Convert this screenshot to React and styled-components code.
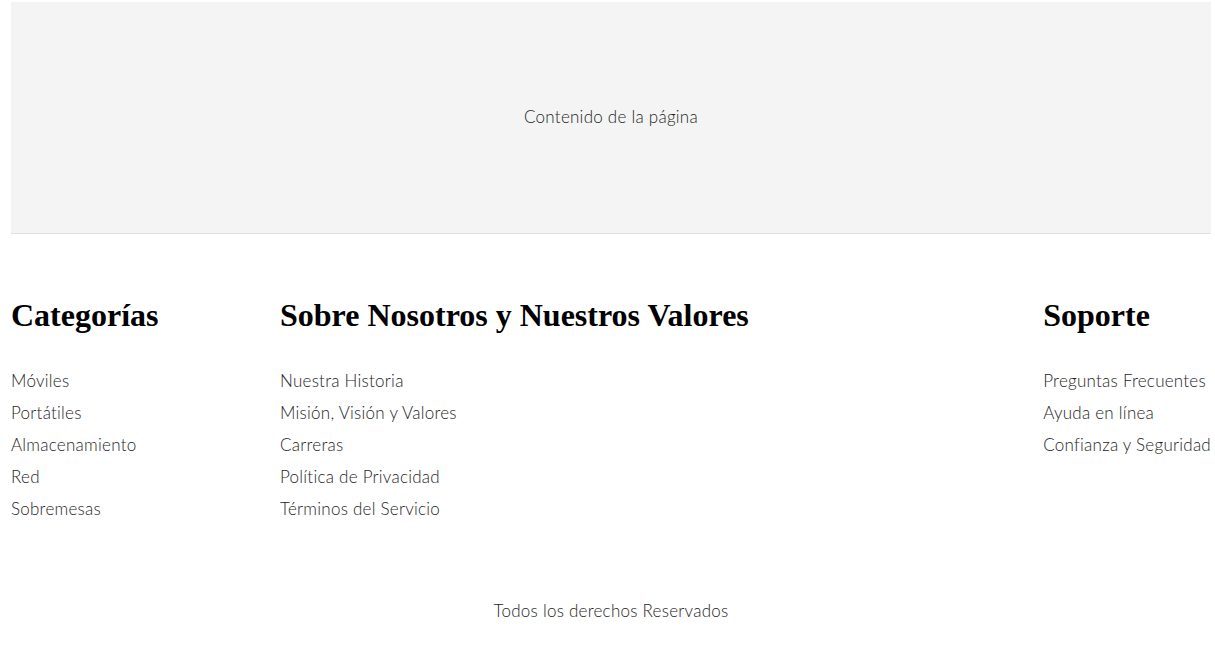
import React from 'react';
import styled, { createGlobalStyle } from 'styled-components';

const GlobalStyle = createGlobalStyle`
	body {
		margin: 0;
		background: #fff;
		font-family: Lato, "Open Sans", sans-serif;
		font-weight: 300;
		color: #1e1e1e;
	}
`;

const Page = styled.div`
	width: 1200px;
	margin-left: 11px;
	padding-top: 2px;
`;

const Content = styled.main`
	height: 232px;
	background-color: #f4f4f4;
	border-bottom: 1px solid #e0e0e0;
	display: flex;
	align-items: center;
	justify-content: center;
	padding-bottom: 2px;
	box-sizing: border-box;
	font-size: 17px;
	letter-spacing: 0.25px;
`;

const Footer = styled.footer`
	padding-top: 61px;
`;

const Columns = styled.div`
	display: grid;
	grid-template-columns: 269px 1fr auto;
`;

const Title = styled.h3`
	font-family: "Liberation Serif", "DejaVu Serif", serif;
	font-weight: 700;
	font-size: 32px;
	line-height: 40px;
	color: #000;
	margin: 0 0 30px 0;
`;

const Links = styled.ul`
	list-style: none;
	margin: 0;
	padding: 0;

	li {
		font-size: 17px;
		letter-spacing: 0.25px;
		line-height: 32px;
	}
`;

const Copy = styled.p`
	margin: 74px 0 0 0;
	text-align: center;
	font-size: 17px;
	letter-spacing: 0.25px;
	line-height: 24px;
`;

const sections = [
	{ title: 'Categorías', items: ['Móviles', 'Portátiles', 'Almacenamiento', 'Red', 'Sobremesas'] },
	{ title: 'Sobre Nosotros y Nuestros Valores', items: ['Nuestra Historia', 'Misión, Visión y Valores', 'Carreras', 'Política de Privacidad', 'Términos del Servicio'] },
	{ title: 'Soporte', items: ['Preguntas Frecuentes', 'Ayuda en línea', 'Confianza y Seguridad'] },
];

const App = () => {
	return (
		<Page>
			<GlobalStyle />
			<Content>Contenido de la página</Content>
			<Footer>
				<Columns>
					{sections.map(section => (
						<div key={section.title}>
							<Title>{section.title}</Title>
							<Links>
								{section.items.map(item => <li key={item}>{item}</li>)}
							</Links>
						</div>
					))}
				</Columns>
				<Copy>Todos los derechos Reservados</Copy>
			</Footer>
		</Page>
	);
}

export default App;
